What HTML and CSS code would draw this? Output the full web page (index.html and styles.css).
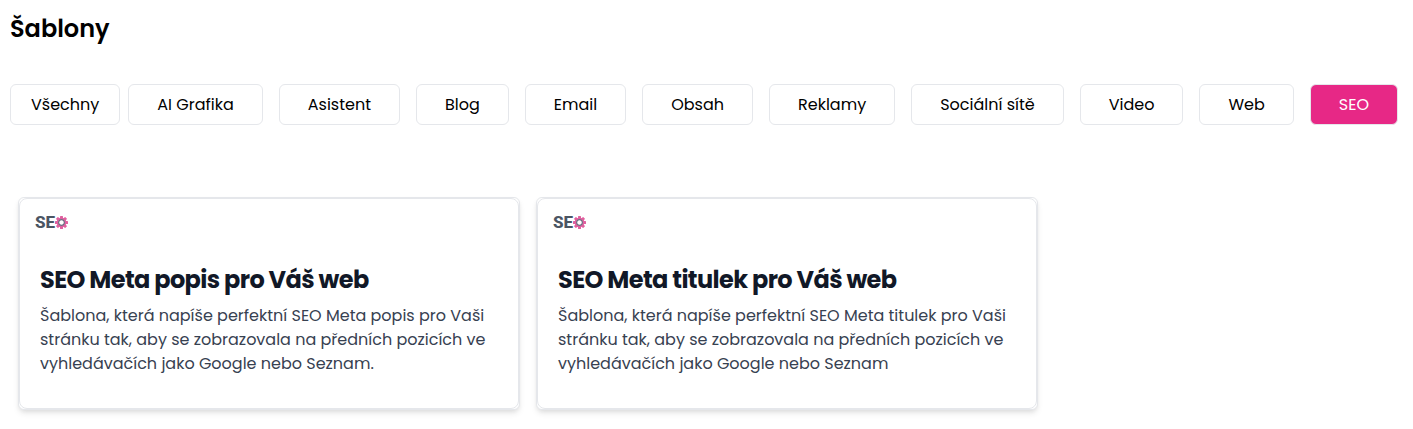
FILE: index.html
```html
<!DOCTYPE html>
<html lang="cs">
    <head>
        <meta charset="utf-8">
        <meta name="viewport" content="width=device-width, initial-scale=1">
        <title>Šablony</title>
        <link rel="stylesheet" href="styles.css">
    </head>
    <body>
        <h1 class="title">Šablony</h1>
        <div class="filters">
            <button class="filter filter-all">Všechny</button>
            <div class="categories">
                <button class="filter">AI Grafika</button>
                <button class="filter">Asistent</button>
                <button class="filter">Blog</button>
                <button class="filter">Email</button>
                <button class="filter">Obsah</button>
                <button class="filter">Reklamy</button>
                <button class="filter">Sociální sítě</button>
                <button class="filter">Video</button>
                <button class="filter">Web</button>
                <button class="filter active">SEO</button>
            </div>
        </div>
        <div class="cards">
            <a class="card" href="#meta-popis">
                <div class="card-content">
                    <div class="logo">
                        <span>SE</span>
                        <svg class="gear" viewBox="-7 -7 14 14" aria-hidden="true">
                            <g fill="#e0609f">
                                <circle r="5.2"/>
                                <rect x="-1.6" y="-7" width="3.2" height="14" rx="0.6"/>
                                <rect x="-1.6" y="-7" width="3.2" height="14" rx="0.6" transform="rotate(45)"/>
                                <rect x="-1.6" y="-7" width="3.2" height="14" rx="0.6" transform="rotate(90)"/>
                                <rect x="-1.6" y="-7" width="3.2" height="14" rx="0.6" transform="rotate(135)"/>
                            </g>
                            <circle r="3.1" fill="#fff" stroke="#6b6f82" stroke-width="1.3"/>
                        </svg>
                    </div>
                    <h2 class="card-title">SEO Meta popis pro Váš web</h2>
                    <p class="card-text">Šablona, která napíše perfektní SEO Meta popis pro Vaši stránku tak, aby se zobrazovala na předních pozicích ve vyhledávačích jako Google nebo Seznam.</p>
                </div>
            </a>
            <a class="card" href="#meta-titulek">
                <div class="card-content">
                    <div class="logo">
                        <span>SE</span>
                        <svg class="gear" viewBox="-7 -7 14 14" aria-hidden="true">
                            <g fill="#e0609f">
                                <circle r="5.2"/>
                                <rect x="-1.6" y="-7" width="3.2" height="14" rx="0.6"/>
                                <rect x="-1.6" y="-7" width="3.2" height="14" rx="0.6" transform="rotate(45)"/>
                                <rect x="-1.6" y="-7" width="3.2" height="14" rx="0.6" transform="rotate(90)"/>
                                <rect x="-1.6" y="-7" width="3.2" height="14" rx="0.6" transform="rotate(135)"/>
                            </g>
                            <circle r="3.1" fill="#fff" stroke="#6b6f82" stroke-width="1.3"/>
                        </svg>
                    </div>
                    <h2 class="card-title">SEO Meta titulek pro Váš web</h2>
                    <p class="card-text">Šablona, která napíše perfektní SEO Meta titulek pro Vaši stránku tak, aby se zobrazovala na předních pozicích ve vyhledávačích jako Google nebo Seznam</p>
                </div>
            </a>
        </div>
    </body>
</html>
```
FILE: styles.css
```css
* {
    margin: 0;
    box-sizing: border-box;
}

body {
    padding: 12px 15px 16px 10px;
    background-color: white;
    color: black;
    font-family: 'Poppins', 'Inter', sans-serif;
    font-size: 16px;
    line-height: 24px;
}

.title {
    font-size: 24px;
    font-weight: 600;
    line-height: 34px;
}

.filters {
    display: flex;
    gap: 8px;
    margin-top: 38px;
}

.categories {
    display: flex;
    flex: 1;
    gap: 16px;
}

.filter {
    flex: 1 1 auto;
    padding: 8px 24px;
    border: 1px solid #e5e7eb;
    border-radius: 6px;
    background-color: white;
    color: black;
    font: inherit;
    line-height: 23px;
    white-space: nowrap;
    cursor: pointer;
}

.filter-all {
    flex: none;
    padding: 8px 20px;
}

.filter:hover {
    border-color: #e72886;
}

.filter.active {
    background-color: #e72886;
    border-color: #e5e7eb;
    color: white;
}

.cards {
    display: grid;
    grid-template-columns: repeat(auto-fit, minmax(320px, 502px));
    gap: 16px;
    margin-top: 72px;
    padding: 0 8px;
}

.card {
    border: 1px solid #e5e7eb;
    border-radius: 6px;
    background-color: white;
    color: inherit;
    text-decoration: none;
    box-shadow: 0 4px 6px -1px rgba(0, 0, 0, 0.1), 0 2px 4px -1px rgba(0, 0, 0, 0.06);
}

.card-content {
    height: 100%;
    padding: 15px 20px 32px;
    border: 1px solid #e5e7eb;
    border-radius: 8px;
}

.logo {
    display: flex;
    align-items: center;
    height: 16px;
    margin-left: -5px;
    color: #4b5563;
    font-family: 'Roboto', sans-serif;
    font-size: 17px;
    font-weight: 800;
    line-height: 16px;
}

.gear {
    width: 13px;
    height: 13px;
}

.card-title {
    margin-top: 34px;
    color: #111827;
    font-size: 24px;
    font-weight: 700;
    line-height: 32px;
    letter-spacing: -0.025em;
}

.card-text {
    margin-top: 8px;
    color: #374151;
}
```
